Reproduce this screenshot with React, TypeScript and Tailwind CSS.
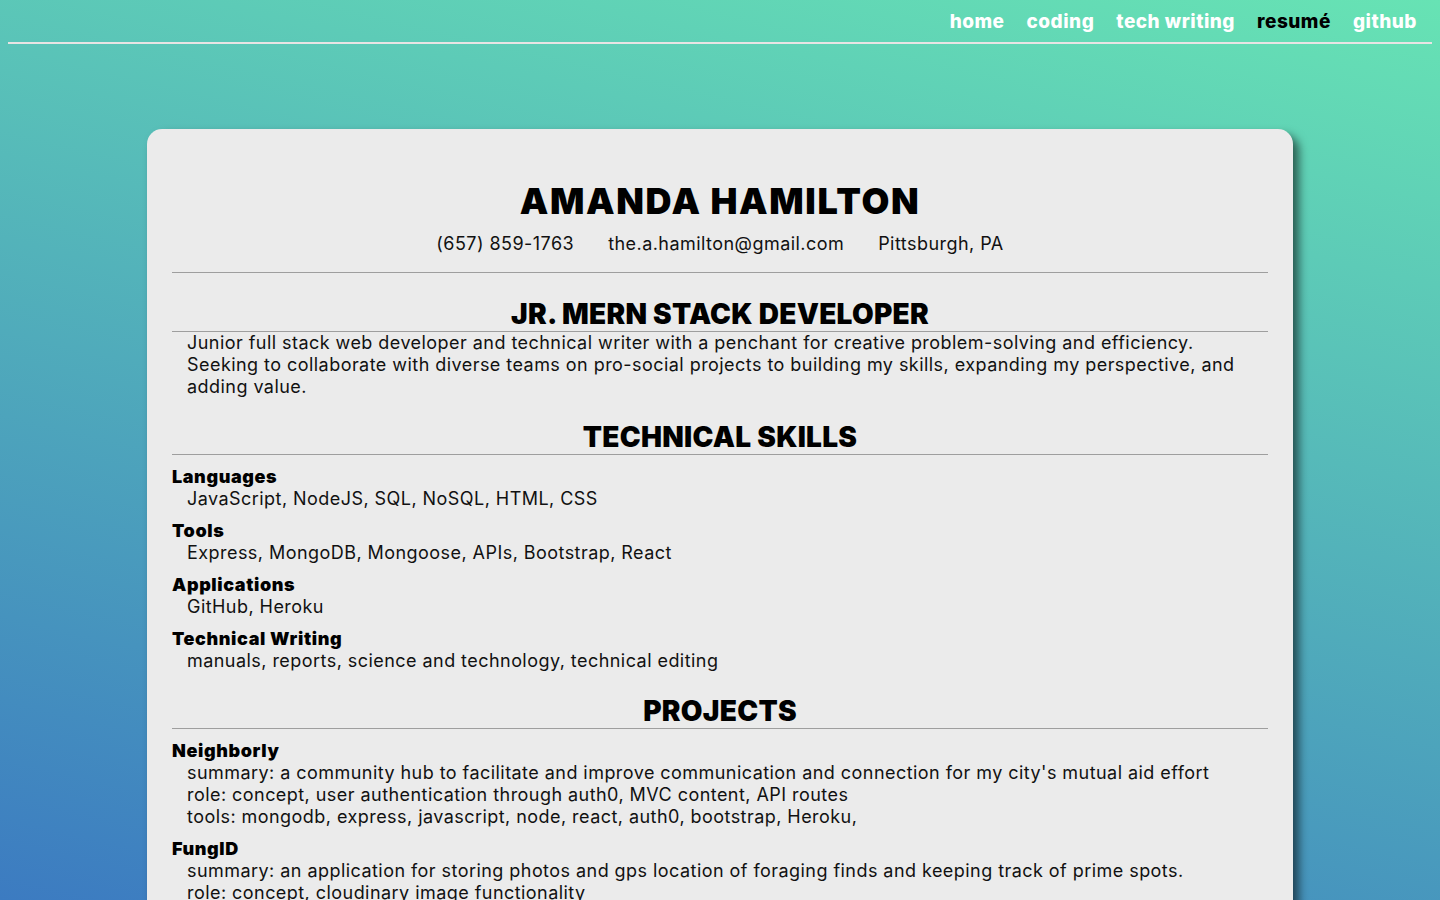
import React from 'react';

type Skill = { label: string; value: string };
type Project = { name: string; lines: string[] };

const navLinks = ['home', 'coding', 'tech writing', 'resumé', 'github'];

const skills: Skill[] = [
  { label: 'Languages', value: 'JavaScript, NodeJS, SQL, NoSQL, HTML, CSS' },
  { label: 'Tools', value: 'Express, MongoDB, Mongoose, APIs, Bootstrap, React' },
  { label: 'Applications', value: 'GitHub, Heroku' },
  { label: 'Technical Writing', value: 'manuals, reports, science and technology, technical editing' },
];

const projects: Project[] = [
  {
    name: 'Neighborly',
    lines: [
      "summary: a community hub to facilitate and improve communication and connection for my city's mutual aid effort",
      'role: concept, user authentication through auth0, MVC content, API routes',
      'tools: mongodb, express, javascript, node, react, auth0, bootstrap, Heroku,',
    ],
  },
  {
    name: 'FungID',
    lines: [
      'summary: an application for storing photos and gps location of foraging finds and keeping track of prime spots.',
      'role: concept, cloudinary image functionality',
      'tools: mongodb, express, javascript, node, handlebars, cloudinary, Heroku',
    ],
  },
];

const font = { fontFamily: 'Inter, "Noto Sans", sans-serif' };

const SectionTitle: React.FC<{ text: string }> = ({ text }) => (
  <h2 className="mt-[22px] border-b border-[#9e9e9e] text-center text-[28px] leading-[34px] font-black tracking-[0.01em] text-black">
    {text}
  </h2>
);

const App: React.FC = () => {
  return (
    <div
      className="min-h-screen bg-[linear-gradient(13deg,#3c7bc1,#67e3b4)] bg-fixed pb-16 text-[#111] tracking-[0.45px]"
      style={font}
    >
      {/* Nav */}
      <nav className="mx-2 flex h-[44px] items-center justify-end gap-[22px] border-b-2 border-[#e8e4e4] pr-[15px]">
        {navLinks.map((link) => (
          <a
            key={link}
            href="#"
            className={`text-[19px] font-extrabold leading-none tracking-[0.5px] ${link === 'resumé' ? 'text-black' : 'text-white'}`}
          >
            {link}
          </a>
        ))}
      </nav>

      {/* Resume card */}
      <div className="mx-auto mt-[85px] w-[1146px] rounded-[15px] bg-[#ebebeb] px-[25px] pt-[50px] pb-10 shadow-[6px_6px_10px_rgba(0,0,0,0.55)]">
        <header className="border-b border-[#9e9e9e] pb-[17px] text-center">
          <h1 className="text-[36px] leading-[44px] font-black tracking-[0.045em] text-black">AMANDA HAMILTON</h1>
          <div className="mt-[10px] flex justify-center gap-[34px] text-[18px] leading-[22px]">
            <span>(657) 859-1763</span>
            <span>the.a.hamilton@gmail.com</span>
            <span>Pittsburgh, PA</span>
          </div>
        </header>

        <h2 className="mt-[24px] border-b border-[#9e9e9e] text-center text-[28px] leading-[34px] font-black tracking-[0.01em] text-black">
          JR. MERN STACK DEVELOPER
        </h2>
        <p className="px-[15px] text-[18px] leading-[22px]">
          Junior full stack web developer and technical writer with a penchant for creative problem-solving and efficiency.
          Seeking to collaborate with diverse teams on pro-social projects to building my skills, expanding my perspective, and
          adding value.
        </p>

        <SectionTitle text="TECHNICAL SKILLS" />
        <div className="mt-[11px]">
          {skills.map((s) => (
            <div key={s.label} className="mb-[10px] text-[18px] leading-[22px]">
              <div className="font-black tracking-[0.6px] text-black">{s.label}</div>
              <div className="pl-[15px]">{s.value}</div>
            </div>
          ))}
        </div>

        <SectionTitle text="PROJECTS" />
        <div className="mt-[11px]">
          {projects.map((p) => (
            <div key={p.name} className="mb-[10px] text-[18px] leading-[22px]">
              <div className="font-black tracking-[0.6px] text-black">{p.name}</div>
              {p.lines.map((line) => (
                <div key={line} className="pl-[15px]">
                  {line}
                </div>
              ))}
            </div>
          ))}
        </div>

        <SectionTitle text="EDUCATION" />
        <div className="mt-[11px] text-[18px] leading-[22px]">
          <div className="font-black tracking-[0.6px] text-black">University of Pittsburgh</div>
          <div className="pl-[15px]">Full Stack Web Development Bootcamp</div>
        </div>
      </div>
    </div>
  );
};

export default App;
